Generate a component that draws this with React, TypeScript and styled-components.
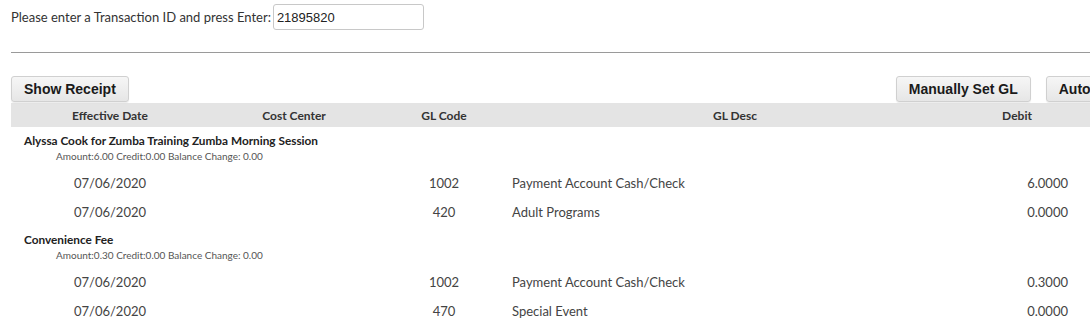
import React from "react";
import styled, { createGlobalStyle } from "styled-components";

interface GlLine {
  date: string;
  code: string;
  desc: string;
  debit: string;
}

interface GlGroup {
  title: string;
  amount: string;
  credit: string;
  balance: string;
  lines: GlLine[];
}

const groups: GlGroup[] = [
  {
    title: "Alyssa Cook for Zumba Training Zumba Morning Session",
    amount: "6.00",
    credit: "0.00",
    balance: "0.00",
    lines: [
      { date: "07/06/2020", code: "1002", desc: "Payment Account Cash/Check", debit: "6.0000" },
      { date: "07/06/2020", code: "420", desc: "Adult Programs", debit: "0.0000" },
    ],
  },
  {
    title: "Convenience Fee",
    amount: "0.30",
    credit: "0.00",
    balance: "0.00",
    lines: [
      { date: "07/06/2020", code: "1002", desc: "Payment Account Cash/Check", debit: "0.3000" },
      { date: "07/06/2020", code: "470", desc: "Special Event", debit: "0.0000" },
    ],
  },
];

const columns = "198px 170px 130px 452px 112px 200px";

const App: React.FC = () => {
  return (
    <>
      <GlobalStyle />
      <Page>
        <SearchRow>
          <SearchLabel>Please enter a Transaction ID and press Enter:</SearchLabel>
          <SearchInput defaultValue="21895820" />
        </SearchRow>
        <Divider />
        <ButtonBar>
          <Button>Show Receipt</Button>
          <ButtonGroup>
            <Button>Manually Set GL</Button>
            <Button>Auto Set GL</Button>
          </ButtonGroup>
        </ButtonBar>
        <Table>
          <HeaderRow>
            <HeaderCell>Effective Date</HeaderCell>
            <HeaderCell>Cost Center</HeaderCell>
            <HeaderCell>GL Code</HeaderCell>
            <HeaderCell>GL Desc</HeaderCell>
            <HeaderCell>Debit</HeaderCell>
            <HeaderCell>Credit</HeaderCell>
          </HeaderRow>
          {groups.map((g) => (
            <Group key={g.title}>
              <GroupTitle>{g.title}</GroupTitle>
              <GroupInfo>
                Amount:{g.amount} Credit:{g.credit} Balance Change: {g.balance}
              </GroupInfo>
              {g.lines.map((l, i) => (
                <DataRow key={i}>
                  <Cell $align="center">{l.date}</Cell>
                  <Cell $align="center"></Cell>
                  <Cell $align="center">{l.code}</Cell>
                  <Cell $align="left">{l.desc}</Cell>
                  <Cell $align="right">{l.debit}</Cell>
                  <Cell $align="right"></Cell>
                </DataRow>
              ))}
            </Group>
          ))}
        </Table>
      </Page>
    </>
  );
};

const GlobalStyle = createGlobalStyle`
  html, body {
    margin: 0;
    padding: 0;
    background: #fff;
    overflow: hidden;
  }
  body {
    font-family: Lato, "Open Sans", sans-serif;
    color: #333;
  }
`;

const Page = styled.div`
  width: 1200px;
  padding: 4px 0 0 11px;
`;

const SearchRow = styled.div`
  display: flex;
  align-items: center;
  gap: 2px;
`;

const SearchLabel = styled.span`
  font-size: 13px;
  color: #333;
`;

const SearchInput = styled.input`
  box-sizing: border-box;
  width: 151px;
  height: 26px;
  border: 1px solid #c8c8c8;
  border-radius: 3px;
  padding: 0 3px;
  font-family: "Liberation Sans", Arial, sans-serif;
  font-size: 13px;
  color: #222;
  outline: none;
`;

const Divider = styled.div`
  margin-top: 22px;
  border-top: 1px solid #9a9a9a;
`;

const ButtonBar = styled.div`
  display: flex;
  margin-top: 23px;
  width: 1150px;
`;

const ButtonGroup = styled.div`
  display: flex;
  gap: 15px;
  margin-left: 767px;
`;

const Button = styled.button`
  box-sizing: border-box;
  height: 26px;
  padding: 0 12px;
  border: 1px solid #d0d0d0;
  border-radius: 3px;
  background: linear-gradient(#f6f6f6, #e6e6e6);
  font-family: "Liberation Sans", Arial, sans-serif;
  font-weight: bold;
  font-size: 14px;
  white-space: nowrap;
  color: #1a1a1a;
  box-shadow: 0 1px 1px rgba(0, 0, 0, 0.08);
`;

const Table = styled.div`
  margin-top: 1px;
`;

const HeaderRow = styled.div`
  display: grid;
  grid-template-columns: ${columns};
  height: 24px;
  align-items: center;
  background: #e4e4e4;
`;

const HeaderCell = styled.div`
  text-align: center;
  font-size: 12px;
  font-weight: bold;
  color: #333;
`;

const Group = styled.div`
  display: flex;
  flex-direction: column;
`;

const GroupTitle = styled.div`
  padding: 7px 0 0 13px;
  line-height: 14px;
  font-size: 11.8px;
  font-weight: bold;
  color: #222;
`;

const GroupInfo = styled.div`
  padding: 2px 0 6px 45px;
  line-height: 13px;
  font-size: 10px;
  color: #555;
`;

const DataRow = styled.div`
  display: grid;
  grid-template-columns: ${columns};
  height: 28.5px;
  align-items: center;
`;

const Cell = styled.div<{ $align: "left" | "center" | "right" }>`
  text-align: ${(p) => p.$align};
  padding: ${(p) => (p.$align === "left" ? "0 0 0 3px" : p.$align === "right" ? "0 5px 0 0" : "0")};
  font-size: 13px;
  color: #444;
`;

export default App;
